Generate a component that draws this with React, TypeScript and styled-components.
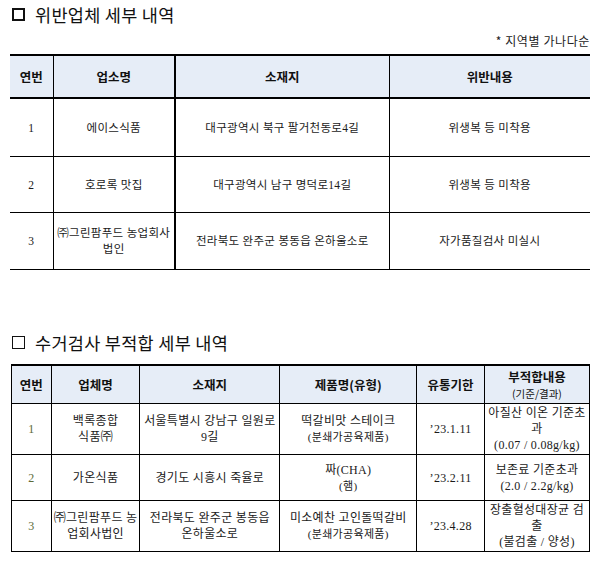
import React from 'react';
import styled, { createGlobalStyle } from 'styled-components';

const GlobalStyle = createGlobalStyle`
  body {
    margin: 0;
    background: #ffffff;
    color: #000000;
    font-family: "Noto Sans CJK KR", sans-serif;
  }
`

const Page = styled.div`
  width: 598px;
  padding: 0 8px 0 10px;
  box-sizing: border-box;
`

const Title = styled.h2<{ $top: number }>`
  display: flex;
  align-items: center;
  gap: 10px;
  margin: ${(p) => p.$top}px 0 0 2px;
  height: 28px;
  font-family: "Noto Sans CJK KR", sans-serif;
  font-size: 17.5px;
  font-weight: 400;
  letter-spacing: 0.3px;
  color: #111;
`

const Check = styled.span<{ $thick: number }>`
  width: 13px;
  height: 13px;
  box-sizing: border-box;
  border: ${(p) => p.$thick}px solid #111;
  flex: none;
`

const Note = styled.div`
  margin-top: 6px;
  height: 14px;
  line-height: 14px;
  text-align: right;
  font-size: 12px;
  letter-spacing: 0.6px;
  color: #222;
`

const Table = styled.table<{ $top: number; $left: number; $outer: boolean }>`
  margin-top: ${(p) => p.$top}px;
  margin-left: ${(p) => p.$left}px;
  border-collapse: collapse;
  table-layout: fixed;
  border-top: 2px solid #000;
  ${(p) => (p.$outer ? 'border-left: 1px solid #000; border-right: 1px solid #000;' : '')}
`

const Th = styled.th<{ $h: number; $right?: number }>`
  height: ${(p) => p.$h}px;
  padding: 0;
  background: #e6edf7;
  font-family: "Noto Sans CJK KR", sans-serif;
  font-size: 12.5px;
  line-height: 16px;
  font-weight: 700;
  color: #111;
  text-align: center;
  vertical-align: middle;
  border-right: ${(p) => p.$right ?? 1}px solid #000;
  &:last-child { border-right: none; }
`

const HeadRow = styled.tr<{ $bottom: number }>`
  border-bottom: ${(p) => p.$bottom}px solid #000;
`

const Small = styled.div`
  margin-top: 2px;
  font-size: 10.5px;
  font-weight: 400;
  line-height: 13px;
`

const Td = styled.td<{ $h: number; $right?: number; $num?: boolean; $lh: number; $size: number }>`
  height: ${(p) => p.$h}px;
  padding: 0 2px;
  font-family: "Liberation Serif", "Noto Sans CJK KR", serif;
  font-size: ${(p) => p.$size}px;
  letter-spacing: 0.3px;
  line-height: ${(p) => p.$lh}px;
  color: ${(p) => (p.$num ? '#5d6b38' : '#1a1a1a')};
  text-align: center;
  vertical-align: middle;
  white-space: nowrap;
  border-right: ${(p) => p.$right ?? 1}px solid #000;
  border-bottom: 1px solid #000;
  &:last-child { border-right: none; }
`

const Td2 = styled(Td)`
  &:last-child { border-right: 1px solid #000; }
`

const Sub = styled.span`
  font-size: 11px;
`

const Lines: React.FC<{ lines: string[] }> = ({ lines }) => (
  <>
    {lines.map((l, i) => (
      <React.Fragment key={i}>
        {i > 0 && <br />}
        {l}
      </React.Fragment>
    ))}
  </>
)

const violations = [
  { no: '1', name: ['에이스식품'], addr: '대구광역시 북구 팔거천동로4길', what: '위생복 등 미착용', h: 57 },
  { no: '2', name: ['호로록 맛집'], addr: '대구광역시 남구 명덕로14길', what: '위생복 등 미착용', h: 55 },
  { no: '3', name: ['㈜그린팜푸드 농업회사', '법인'], addr: '전라북도 완주군 봉동읍 온하울소로', what: '자가품질검사 미실시', h: 56 },
]

const failures = [
  {
    no: '1', name: ['백록종합', '식품㈜'], addr: ['서울특별시 강남구 일원로', '9길'],
    prod: '떡갈비맛 스테이크', kind: '(분쇄가공육제품)', date: '’23.1.11',
    res: ['아질산 이온 기준초', '과', '(0.07 / 0.08g/kg)'], h: 50,
  },
  {
    no: '2', name: ['가온식품'], addr: ['경기도 시흥시 죽율로'],
    prod: '짜(CHA)', kind: '(햄)', date: '’23.2.11',
    res: ['보존료 기준초과', '(2.0 / 2.2g/kg)'], h: 45,
  },
  {
    no: '3', name: ['㈜그린팜푸드 농', '업회사법인'], addr: ['전라북도 완주군 봉동읍', '온하울소로'],
    prod: '미소예찬 고인돌떡갈비', kind: '(분쇄가공육제품)', date: '’23.4.28',
    res: ['장출혈성대장균 검', '출', '(불검출 / 양성)'], h: 50,
  },
]

const App: React.FC = () => {
  return (
    <Page>
      <GlobalStyle />
      <Title $top={0}><Check $thick={2} />위반업체 세부 내역</Title>
      <Note>* 지역별 가나다순</Note>
      <Table $top={6} $left={0} $outer={false}>
        <colgroup>
          <col style={{ width: 43 }} />
          <col style={{ width: 122 }} />
          <col style={{ width: 214 }} />
          <col style={{ width: 201 }} />
        </colgroup>
        <thead>
          <HeadRow $bottom={2}>
            <Th $h={41}>연번</Th>
            <Th $h={41} $right={2}>업소명</Th>
            <Th $h={41}>소재지</Th>
            <Th $h={41}>위반내용</Th>
          </HeadRow>
        </thead>
        <tbody>
          {violations.map((v) => (
            <tr key={v.no}>
              <Td $h={v.h} $lh={16} $size={11.5}>{v.no}</Td>
              <Td $h={v.h} $lh={16} $size={11.5} $right={2}><Lines lines={v.name} /></Td>
              <Td $h={v.h} $lh={16} $size={11.5}>{v.addr}</Td>
              <Td $h={v.h} $lh={16} $size={11.5}>{v.what}</Td>
            </tr>
          ))}
        </tbody>
      </Table>

      <Title $top={58}><Check $thick={1.5} />수거검사 부적합 세부 내역</Title>
      <Table $top={8} $left={1} $outer={true}>
        <colgroup>
          <col style={{ width: 40 }} />
          <col style={{ width: 88 }} />
          <col style={{ width: 140 }} />
          <col style={{ width: 137 }} />
          <col style={{ width: 68 }} />
          <col style={{ width: 105 }} />
        </colgroup>
        <thead>
          <HeadRow $bottom={1}>
            <Th $h={37}>연번</Th>
            <Th $h={37}>업체명</Th>
            <Th $h={37}>소재지</Th>
            <Th $h={37}>제품명(유형)</Th>
            <Th $h={37}>유통기한</Th>
            <Th $h={37}>부적합내용<Small>(기준/결과)</Small></Th>
          </HeadRow>
        </thead>
        <tbody>
          {failures.map((f) => (
            <tr key={f.no}>
              <Td2 $h={f.h} $lh={16} $size={12} $num>{f.no}</Td2>
              <Td2 $h={f.h} $lh={16} $size={12}><Lines lines={f.name} /></Td2>
              <Td2 $h={f.h} $lh={16} $size={12}><Lines lines={f.addr} /></Td2>
              <Td2 $h={f.h} $lh={16} $size={12}>{f.prod}<br /><Sub>{f.kind}</Sub></Td2>
              <Td2 $h={f.h} $lh={16} $size={12}>{f.date}</Td2>
              <Td2 $h={f.h} $lh={16} $size={12}><Lines lines={f.res} /></Td2>
            </tr>
          ))}
        </tbody>
      </Table>
    </Page>
  )
}

export default App;
